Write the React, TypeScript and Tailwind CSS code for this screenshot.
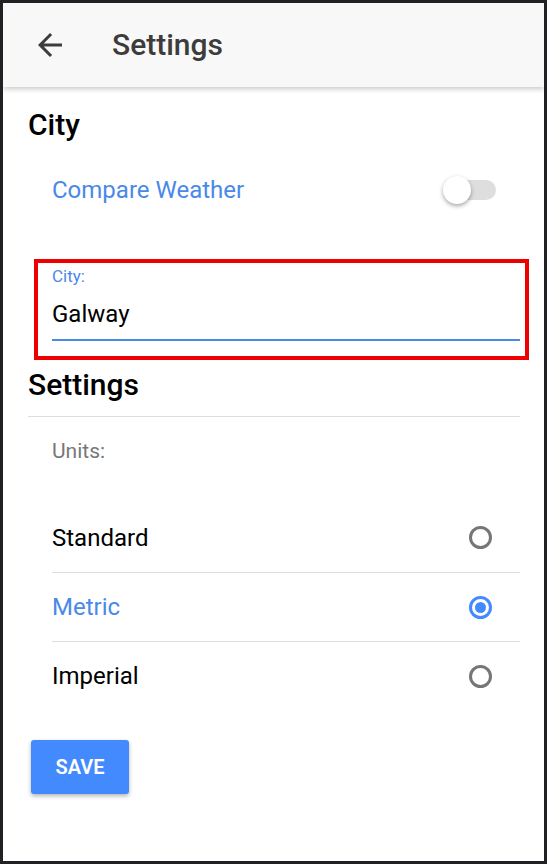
import { useState } from 'react';

const units = ['Standard', 'Metric', 'Imperial'];

function BackArrow() {
  return (
    <svg viewBox="0 0 24 24" className="w-9 h-9 text-[#3c3c3c]" fill="currentColor">
      <path d="M20 11H7.83l5.59-5.59L12 4l-8 8 8 8 1.41-1.41L7.83 13H20v-2z" />
    </svg>
  );
}

function Radio({ checked }: { checked: boolean }) {
  return checked ? (
    <span className="w-[23px] h-[23px] rounded-full border-[3px] border-[#448aff] flex items-center justify-center">
      <span className="w-[11px] h-[11px] rounded-full bg-[#448aff]" />
    </span>
  ) : (
    <span className="w-[23px] h-[23px] rounded-full border-[3px] border-[#767676]" />
  );
}

export default function App() {
  const [unit, setUnit] = useState('Metric');

  return (
    <div
      className="w-[547px] h-[864px] bg-[#202124] p-[3px]"
      style={{ fontFamily: 'Roboto, "Noto Sans", sans-serif' }}
    >
      <div className="h-full bg-white flex flex-col overflow-hidden">
        <header className="h-[84px] bg-[#f8f8f8] flex items-center shrink-0 shadow-[0_2px_5px_rgba(0,0,0,0.22)] relative z-10">
          <button className="ml-[29px] w-9 h-9 flex items-center justify-center">
            <BackArrow />
          </button>
          <h1 className="ml-[44px] text-[30px] leading-9 font-medium text-[#3c3c3c]">Settings</h1>
        </header>

        <main className="pl-[25px] pr-[24px] pt-5">
          <h2 className="text-[30px] leading-9 font-medium text-black">City</h2>

          <div className="mt-[23px] h-12 pl-6 flex items-center justify-between">
            <span className="text-[24px] leading-8 text-[#4a89e8]">Compare Weather</span>
            <span className="relative w-[53px] h-5 mr-6 flex items-center">
              <span className="absolute left-[3px] right-0 h-5 rounded-full bg-[#dedede]" />
              <span className="absolute left-0 w-7 h-7 rounded-full bg-white shadow-[0_2px_4px_rgba(0,0,0,0.35)]" />
            </span>
          </div>

          <div className="mt-[45px] ml-[6px] -mr-[9px] border-[4px] border-[#ee0000] pl-[14px] pr-[5px] pt-[3px] pb-[15px]">
            <label className="block text-[17px] leading-5 text-[#4a89e8]">City:</label>
            <div className="mt-3 pb-[9px] border-b-2 border-[#4a89e8] text-[24px] leading-8 text-black">Galway</div>
          </div>

          <h2 className="mt-[7px] text-[30px] leading-9 font-medium text-black">Settings</h2>
          <div className="mt-[13px] h-px bg-[#dddddd]" />

          <div className="pl-6">
            <div className="mt-5 text-[21px] leading-7 text-[#777777]">Units:</div>
            <ul className="mt-[38px]">
              {units.map((u, i) => (
                <li
                  key={u}
                  onClick={() => setUnit(u)}
                  className={
                    'h-[69px] flex items-center justify-between pr-[28px] ' +
                    (i > 0 ? 'border-t border-[#dddddd]' : '')
                  }
                >
                  <span className={'text-[24px] leading-8 ' + (unit === u ? 'text-[#4a89e8]' : 'text-black')}>
                    {u}
                  </span>
                  <Radio checked={unit === u} />
                </li>
              ))}
            </ul>
          </div>

          <button className="mt-[30px] ml-[3px] w-[98px] h-[54px] rounded-[3px] bg-[#448aff] text-white text-[20px] font-semibold shadow-[0_2px_4px_rgba(0,0,0,0.3)]">
            SAVE
          </button>
        </main>
      </div>
    </div>
  );
}
